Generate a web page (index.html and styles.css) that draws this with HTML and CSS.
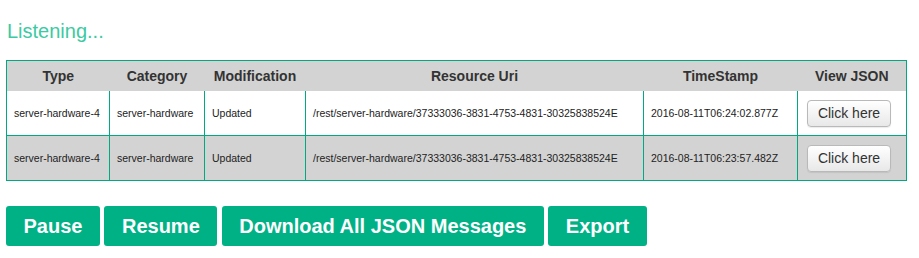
FILE: index.html
```html
<!DOCTYPE html>
<html>
<head>
<meta charset="utf-8">
<link rel="stylesheet" href="styles.css">
</head>
<body>
<div class="page">
  <div class="status">Listening...</div>
  <table class="events">
    <colgroup>
      <col class="c1"><col class="c2"><col class="c3"><col class="c4"><col class="c5"><col class="c6">
    </colgroup>
    <thead>
      <tr>
        <th>Type</th><th>Category</th><th>Modification</th><th>Resource Uri</th><th>TimeStamp</th><th>View JSON</th>
      </tr>
    </thead>
    <tbody>
      <tr class="odd">
        <td>server-hardware-4</td>
        <td>server-hardware</td>
        <td>Updated</td>
        <td>/rest/server-hardware/37333036-3831-4753-4831-30325838524E</td>
        <td>2016-08-11T06:24:02.877Z</td>
        <td><button class="view">Click here</button></td>
      </tr>
      <tr class="even">
        <td>server-hardware-4</td>
        <td>server-hardware</td>
        <td>Updated</td>
        <td>/rest/server-hardware/37333036-3831-4753-4831-30325838524E</td>
        <td>2016-08-11T06:23:57.482Z</td>
        <td><button class="view">Click here</button></td>
      </tr>
    </tbody>
  </table>
  <div class="actions">
    <button class="action">Pause</button>
    <button class="action">Resume</button>
    <button class="action">Download All JSON Messages</button>
    <button class="action">Export</button>
  </div>
</div>
</body>
</html>
```
FILE: styles.css
```css
html, body {
  margin: 0;
  padding: 0;
  background: #fff;
}
body {
  font-family: "Liberation Sans", Arial, sans-serif;
  color: #222;
}
.page {
  padding: 19px 6px 0 6px;
}
.status {
  font-size: 20px;
  line-height: 24px;
  color: #3ccaa2;
  margin-left: 1px;
  height: 24px;
  margin-bottom: 17px;
}
.events {
  width: 900px;
  table-layout: fixed;
  border-collapse: collapse;
  border: 1px solid #01a982;
}
.c1 { width: 103px; }
.c2 { width: 95px; }
.c3 { width: 101px; }
.c4 { width: 338px; }
.c5 { width: 154px; }
.c6 { width: 109px; }
.events th {
  background: #d3d3d3;
  height: 30px;
  padding: 0;
  font-size: 14px;
  font-weight: bold;
  color: #333;
  text-align: center;
  vertical-align: middle;
}
.events td {
  height: 44px;
  padding: 0 7px;
  font-size: 10.5px;
  color: #222;
  vertical-align: middle;
  text-align: left;
  border-left: 1px solid #01a982;
}
.events tbody tr + tr td {
  border-top: 1px solid #01a982;
}
.events tr.even td {
  background: #d3d3d3;
}
.view {
  display: block;
  margin-left: 2px;
  width: 84px;
  height: 27px;
  padding: 0;
  font-family: "Liberation Sans", Arial, sans-serif;
  font-size: 14px;
  color: #333;
  background: linear-gradient(#ffffff, #e8e8e8);
  border: 1px solid #b9b9b9;
  border-radius: 4px;
  box-shadow: 0 1px 1px rgba(0,0,0,0.08);
}
.actions {
  display: flex;
  gap: 4.5px;
  margin-top: 25px;
}
.action {
  height: 40px;
  padding: 0 17.5px;
  border: none;
  border-radius: 3px;
  background: #01b186;
  color: #fff;
  font-family: "Liberation Sans", Arial, sans-serif;
  font-size: 20px;
  font-weight: bold;
}
```
